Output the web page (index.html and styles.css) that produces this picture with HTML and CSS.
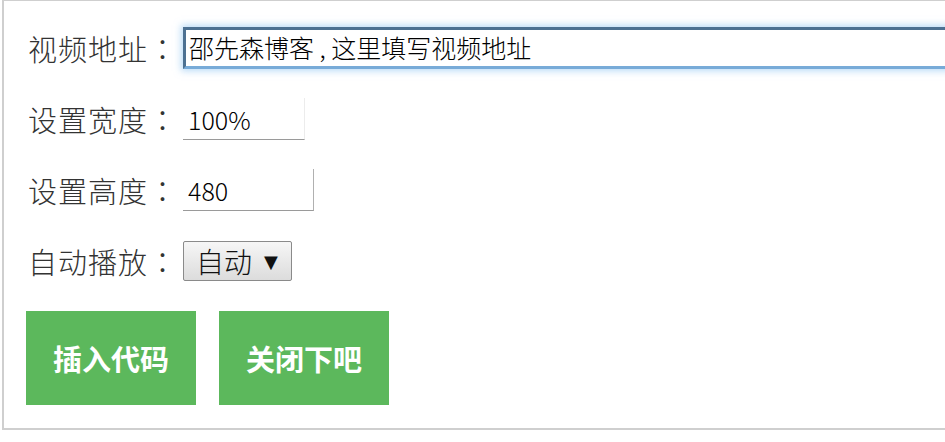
FILE: index.html
```html
<!DOCTYPE html>
<html lang="zh-CN">
<head>
<meta charset="utf-8">
<title>插入视频</title>
<link rel="stylesheet" href="styles.css">
</head>
<body>
<div class="panel">
  <div class="row row-url">
    <span class="label">视频地址<span class="colon" lang="zh-TW">：</span></span>
    <input class="field field-url" type="text" value="邵先森博客 , 这里填写视频地址">
  </div>
  <div class="row">
    <span class="label">设置宽度<span class="colon" lang="zh-TW">：</span></span>
    <input class="field field-size field-width" type="text" value="100%">
  </div>
  <div class="row">
    <span class="label">设置高度<span class="colon" lang="zh-TW">：</span></span>
    <input class="field field-size field-height" type="text" value="480">
  </div>
  <div class="row row-select">
    <span class="label">自动播放<span class="colon" lang="zh-TW">：</span></span>
    <span class="select-box"><span class="select-text">自动</span><span class="select-arrow">▼</span></span>
  </div>
  <div class="actions">
    <button class="btn" type="button">插入代码</button>
    <button class="btn" type="button">关闭下吧</button>
  </div>
</div>
</body>
</html>
```

FILE: styles.css
```css
html, body {
  margin: 0;
  padding: 0;
  background: #fff;
  overflow: hidden;
}

body {
  font-family: "Noto Sans CJK SC", "Noto Sans", "Liberation Sans", sans-serif;
  width: 945px;
  height: 442px;
}

.panel {
  margin-left: 2px;
  width: 1100px;
  border: 2px solid #cfcfcf;
  border-top-width: 1px;
  padding: 26px 0 23px 22px;
  display: flex;
  flex-direction: column;
}

.row {
  height: 42px;
  display: flex;
  align-items: center;
  margin-bottom: 29px;
}

.label {
  font-size: 29px;
  font-weight: 300;
  color: #333;
  width: 155px;
  letter-spacing: 1px;
  padding-left: 2px;
  white-space: nowrap;
  line-height: 42px;
}

.colon {
  font-family: "Noto Sans CJK TC", "Noto Sans CJK SC", sans-serif;
}

.field {
  font-family: "Noto Sans CJK SC", "Liberation Sans", sans-serif;
  font-weight: 300;
  color: #000;
  background: #fff;
  outline: none;
  box-sizing: border-box;
  margin: 0;
}

.field-url {
  width: 800px;
  height: 42px;
  font-size: 25px;
  padding: 0 0 2px 3px;
  border-top: 3px solid #4d7192;
  border-left: 3px solid #4d7192;
  border-bottom: 3px solid #78abd8;
  border-right: 3px solid #78abd8;
  box-shadow: 0 0 7px 2px rgba(130, 190, 240, 0.55);
}

.field-size {
  height: 42px;
  font-size: 25px;
  padding: 0 0 0 5px;
  border: none;
  border-bottom: 1px solid #9a9a9a;
  border-right: 1px solid #b0b0b0;
}

.field-width {
  width: 122px;
  border-right-color: #ececec;
}

.field-height {
  width: 131px;
}

.select-box {
  box-sizing: border-box;
  width: 109px;
  height: 40px;
  display: flex;
  align-items: center;
  padding-left: 12px;
  border: 1px solid #8a8a8a;
  border-radius: 2px;
  background: linear-gradient(#f6f6f6, #dcdcdc);
  color: #111;
}

.select-text {
  font-size: 28px;
  font-weight: 300;
}

.select-arrow {
  font-size: 18px;
  margin-left: 12px;
  font-family: "DejaVu Sans", sans-serif;
}

.actions {
  display: flex;
  gap: 23px;
}

.btn {
  width: 170px;
  height: 94px;
  border: none;
  margin: 0;
  padding: 0;
  background: #5cb85c;
  color: #fff;
  font-family: "Noto Sans CJK SC", sans-serif;
  font-size: 29px;
  font-weight: 700;
}
```
